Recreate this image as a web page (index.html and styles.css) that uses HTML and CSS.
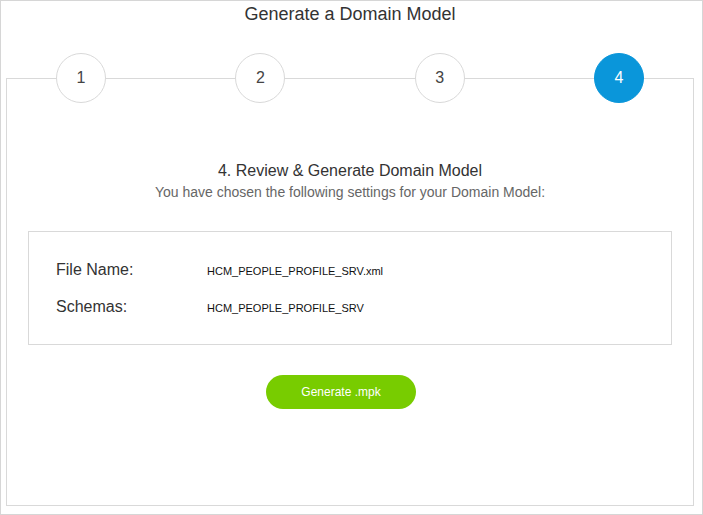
FILE: index.html
```html
<!DOCTYPE html>
<html>
<head>
<meta charset="utf-8">
<link rel="stylesheet" href="styles.css">
</head>
<body>
<div class="frame">
  <h1 class="title">Generate a Domain Model</h1>
  <div class="panel">
    <div class="steps">
      <div class="step">1</div>
      <div class="step">2</div>
      <div class="step">3</div>
      <div class="step active">4</div>
    </div>
    <h2 class="heading">4. Review &amp; Generate Domain Model</h2>
    <p class="sub">You have chosen the following settings for your Domain Model:</p>
    <div class="summary">
      <div class="row"><span class="label">File Name:</span><span class="value">HCM_PEOPLE_PROFILE_SRV.xml</span></div>
      <div class="row"><span class="label">Schemas:</span><span class="value">HCM_PEOPLE_PROFILE_SRV</span></div>
    </div>
    <div class="actions">
      <button class="btn">Generate .mpk</button>
    </div>
  </div>
</div>
</body>
</html>
```
FILE: styles.css
```css
html, body {
  margin: 0;
  padding: 0;
  background: #fff;
}
body {
  font-family: "Liberation Sans", Arial, sans-serif;
  color: #333;
}
.frame {
  box-sizing: border-box;
  width: 703px;
  height: 515px;
  border: 1px solid #d6d6d6;
  padding: 0 8px 8px 5px;
  display: flex;
  flex-direction: column;
}
.title {
  margin: 0 0 51px 0;
  height: 26px;
  line-height: 26px;
  font-size: 18px;
  font-weight: normal;
  text-align: center;
  color: #333;
}
.panel {
  flex: 1;
  border: 1px solid #d9d9d9;
  display: flex;
  flex-direction: column;
}
.steps {
  margin-top: -26px;
  padding: 0 49px;
  display: flex;
  justify-content: space-between;
}
.step {
  box-sizing: border-box;
  width: 50px;
  height: 50px;
  border-radius: 50%;
  border: 1px solid #d9d9d9;
  background: #fff;
  display: flex;
  align-items: center;
  justify-content: center;
  font-size: 16px;
  color: #444;
}
.step.active {
  background: #0a96da;
  border-color: #0a96da;
  color: #fff;
}
.heading {
  margin: 58px 0 0 0;
  font-size: 16px;
  line-height: 20px;
  font-weight: normal;
  text-align: center;
  color: #333;
}
.sub {
  margin: 2px 0 0 0;
  font-size: 14px;
  line-height: 18px;
  text-align: center;
  color: #666;
}
.summary {
  margin: 30px 21px 0 21px;
  border: 1px solid #d9d9d9;
  padding: 28px 27px 26px 27px;
  display: flex;
  flex-direction: column;
  gap: 16px;
}
.row {
  display: flex;
  align-items: baseline;
  line-height: 20px;
}
.label {
  width: 151px;
  font-size: 16px;
  color: #333;
}
.value {
  font-size: 11px;
  color: #111;
}
.actions {
  margin-top: 30px;
  display: flex;
  justify-content: center;
  padding-right: 18px;
}
.btn {
  width: 150px;
  height: 34px;
  border: none;
  border-radius: 17px;
  background: #78cc00;
  color: #fff;
  font-family: "Liberation Sans", Arial, sans-serif;
  font-size: 12px;
  padding: 0;
}
```
